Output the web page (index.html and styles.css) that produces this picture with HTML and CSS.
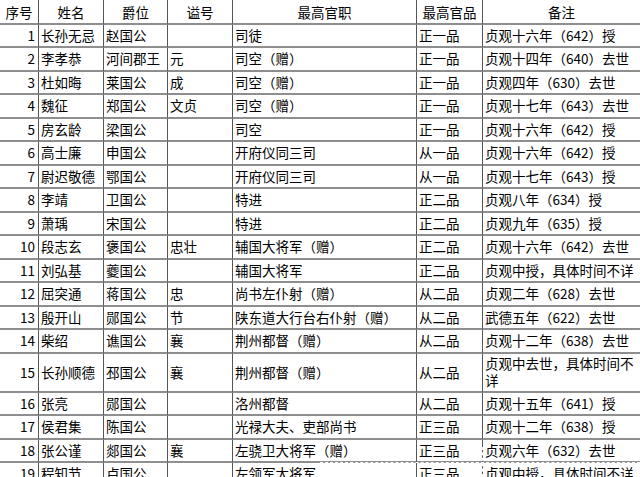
FILE: index.html
```html
<!DOCTYPE html>
<html lang="zh-CN">
<head>
<meta charset="utf-8">
<title>凌烟阁功臣</title>
<link rel="stylesheet" href="styles.css">
</head>
<body>
<div class="sheet">
<table class="grid">
<colgroup>
<col class="c-no"><col class="c-name"><col class="c-title"><col class="c-posth"><col class="c-office"><col class="c-rank"><col class="c-note">
</colgroup>
<thead>
<tr class="head"><th>序号</th><th>姓名</th><th>爵位</th><th>谥号</th><th>最高官职</th><th>最高官品</th><th class="last">备注</th></tr>
</thead>
<tbody>
<tr><td class="no">1</td><td>长孙无忌</td><td>赵国公</td><td></td><td>司徒</td><td>正一品</td><td class="last">贞观十六年（642）授</td></tr>
<tr><td class="no">2</td><td>李孝恭</td><td>河间郡王</td><td>元</td><td>司空（赠）</td><td>正一品</td><td class="last">贞观十四年（640）去世</td></tr>
<tr><td class="no">3</td><td>杜如晦</td><td>莱国公</td><td>成</td><td>司空（赠）</td><td>正一品</td><td class="last">贞观四年（630）去世</td></tr>
<tr><td class="no">4</td><td>魏征</td><td>郑国公</td><td>文贞</td><td>司空（赠）</td><td>正一品</td><td class="last">贞观十七年（643）去世</td></tr>
<tr><td class="no">5</td><td>房玄龄</td><td>梁国公</td><td></td><td>司空</td><td>正一品</td><td class="last">贞观十六年（642）授</td></tr>
<tr><td class="no">6</td><td>高士廉</td><td>申国公</td><td></td><td>开府仪同三司</td><td>从一品</td><td class="last">贞观十六年（642）授</td></tr>
<tr><td class="no">7</td><td>尉迟敬德</td><td>鄂国公</td><td></td><td>开府仪同三司</td><td>从一品</td><td class="last">贞观十七年（643）授</td></tr>
<tr><td class="no">8</td><td>李靖</td><td>卫国公</td><td></td><td>特进</td><td>正二品</td><td class="last">贞观八年（634）授</td></tr>
<tr><td class="no">9</td><td>萧瑀</td><td>宋国公</td><td></td><td>特进</td><td>正二品</td><td class="last">贞观九年（635）授</td></tr>
<tr><td class="no">10</td><td>段志玄</td><td>褒国公</td><td>忠壮</td><td>辅国大将军（赠）</td><td>正二品</td><td class="last">贞观十六年（642）去世</td></tr>
<tr><td class="no">11</td><td>刘弘基</td><td>夔国公</td><td></td><td>辅国大将军</td><td>正二品</td><td class="last">贞观中授，具体时间不详</td></tr>
<tr><td class="no">12</td><td>屈突通</td><td>蒋国公</td><td>忠</td><td>尚书左仆射（赠）</td><td>从二品</td><td class="last">贞观二年（628）去世</td></tr>
<tr><td class="no">13</td><td>殷开山</td><td>郧国公</td><td>节</td><td>陕东道大行台右仆射（赠）</td><td>从二品</td><td class="last">武德五年（622）去世</td></tr>
<tr><td class="no">14</td><td>柴绍</td><td>谯国公</td><td>襄</td><td>荆州都督（赠）</td><td>从二品</td><td class="last">贞观十二年（638）去世</td></tr>
<tr class="tall"><td class="no">15</td><td>长孙顺德</td><td>邳国公</td><td>襄</td><td>荆州都督（赠）</td><td>从二品</td><td class="last">贞观中去世，具体时间不详</td></tr>
<tr><td class="no">16</td><td>张亮</td><td>郧国公</td><td></td><td>洛州都督</td><td>从二品</td><td class="last">贞观十五年（641）授</td></tr>
<tr><td class="no">17</td><td>侯君集</td><td>陈国公</td><td></td><td>光禄大夫、吏部尚书</td><td>正三品</td><td class="last">贞观十二年（638）授</td></tr>
<tr><td class="no">18</td><td>张公谨</td><td>郯国公</td><td>襄</td><td>左骁卫大将军（赠）</td><td>正三品</td><td class="last">贞观六年（632）去世</td></tr>
<tr><td class="no">19</td><td>程知节</td><td>卢国公</td><td></td><td>左领军大将军</td><td>正三品</td><td class="last">贞观中授，具体时间不详</td></tr>
</tbody>
</table>
<div class="marquee-h"></div>
<div class="marquee-v"></div>
</div>
</body>
</html>
```

FILE: styles.css
```css
html, body {
  margin: 0;
  padding: 0;
  background: #ffffff;
  overflow: hidden;
}

.sheet {
  position: relative;
  width: 640px;
  height: 477px;
  overflow: hidden;
}

.grid {
  border-collapse: separate;
  border-spacing: 0;
  table-layout: fixed;
  width: 640px;
  font-family: "Noto Sans CJK SC", "Noto Sans", sans-serif;
  font-size: 13.5px;
  color: #000000;
}

.c-no { width: 39px; }
.c-name { width: 65px; }
.c-title { width: 64px; }
.c-posth { width: 65px; }
.c-office { width: 184px; }
.c-rank { width: 66px; }
.c-note { width: 157px; }

.grid th,
.grid td {
  border-right: 1px solid #555555;
  border-bottom: 2px solid #8e8e8e;
  padding: 0 0 0 2px;
  line-height: 17px;
  vertical-align: middle;
  text-align: left;
  white-space: normal;
  overflow: hidden;
  font-weight: normal;
}

.grid th {
  text-align: center;
  padding: 2px 0 0 0;
}

.grid .last {
  border-right: none;
}

.grid td.no {
  text-align: right;
  padding: 0 3px 0 0;
}

.head { height: 24.5px; }
.grid tbody tr { height: 23.5px; }
.grid tbody tr.tall { height: 39px; }

.marquee-h {
  position: absolute;
  left: 320px;
  top: 462px;
  width: 320px;
  height: 0;
  border-top: 1px dashed #ffffff;
}

.marquee-v {
  position: absolute;
  left: 482px;
  top: 447px;
  width: 0;
  height: 30px;
  border-left: 1px dashed #ffffff;
}
```
